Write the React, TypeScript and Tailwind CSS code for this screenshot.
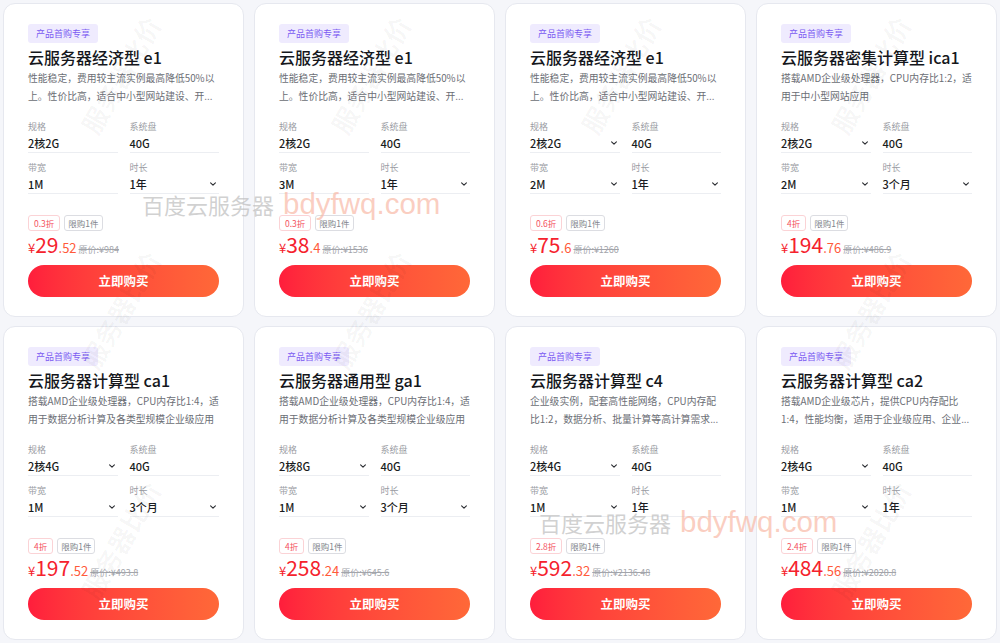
import React from "react";

type Field = { label: string; value: string; select?: boolean };

type Product = {
  title: string;
  desc: [string, string];
  fields: Field[];
  discount: string;
  price: string;
  cents: string;
  original: string;
};

const f = (
  spec: string,
  specSel: boolean,
  bw: string,
  bwSel: boolean,
  time: string,
  timeSel: boolean
): Field[] => [
  { label: "规格", value: spec, select: specSel },
  { label: "系统盘", value: "40G" },
  { label: "带宽", value: bw, select: bwSel },
  { label: "时长", value: time, select: timeSel },
];

const e1Desc: [string, string] = ["性能稳定，费用较主流实例最高降低50%以", "上。性价比高，适合中小型网站建设、开..."];
const ca1Desc: [string, string] = ["搭载AMD企业级处理器，CPU内存比1:4，适", "用于数据分析计算及各类型规模企业级应用"];

const products: Product[] = [
  {
    title: "云服务器经济型 e1",
    desc: e1Desc,
    fields: f("2核2G", false, "1M", false, "1年", true),
    discount: "0.3折",
    price: "29",
    cents: ".52",
    original: "原价:¥984",
  },
  {
    title: "云服务器经济型 e1",
    desc: e1Desc,
    fields: f("2核2G", false, "3M", false, "1年", true),
    discount: "0.3折",
    price: "38",
    cents: ".4",
    original: "原价:¥1536",
  },
  {
    title: "云服务器经济型 e1",
    desc: e1Desc,
    fields: f("2核2G", true, "2M", true, "1年", true),
    discount: "0.6折",
    price: "75",
    cents: ".6",
    original: "原价:¥1260",
  },
  {
    title: "云服务器密集计算型 ica1",
    desc: ["搭载AMD企业级处理器，CPU内存比1:2，适", "用于中小型网站应用"],
    fields: f("2核2G", true, "2M", true, "3个月", true),
    discount: "4折",
    price: "194",
    cents: ".76",
    original: "原价:¥486.9",
  },
  {
    title: "云服务器计算型 ca1",
    desc: ca1Desc,
    fields: f("2核4G", true, "1M", true, "3个月", true),
    discount: "4折",
    price: "197",
    cents: ".52",
    original: "原价:¥493.8",
  },
  {
    title: "云服务器通用型 ga1",
    desc: ca1Desc,
    fields: f("2核8G", true, "1M", true, "3个月", true),
    discount: "4折",
    price: "258",
    cents: ".24",
    original: "原价:¥645.6",
  },
  {
    title: "云服务器计算型 c4",
    desc: ["企业级实例，配套高性能网络，CPU内存配", "比1:2，数据分析、批量计算等高计算需求..."],
    fields: f("2核4G", true, "1M", true, "1年", false),
    discount: "2.8折",
    price: "592",
    cents: ".32",
    original: "原价:¥2136.48",
  },
  {
    title: "云服务器计算型 ca2",
    desc: ["搭载AMD企业级芯片，提供CPU内存配比", "1:4，性能均衡，适用于企业级应用、企业..."],
    fields: f("2核4G", true, "1M", true, "1年", false),
    discount: "2.4折",
    price: "484",
    cents: ".56",
    original: "原价:¥2020.8",
  },
];

const Chevron = () => (
  <svg width="8" height="8" viewBox="0 0 10 10" fill="none" className="mr-[2px] shrink-0">
    <path d="M2 3.5 L5 6.5 L8 3.5" stroke="#2a2c31" strokeWidth="1.4" strokeLinecap="round" strokeLinejoin="round" />
  </svg>
);

function ProductCard({ p }: { p: Product }) {
  return (
    <div className="flex flex-col rounded-[12px] border border-[#e6e8ef] bg-white px-6 pt-[20px]">
      <div className="flex">
        <span className="rounded-[3px] bg-[#efebfe] px-[8px] py-[3px] text-[9px] leading-[13px] text-[#7b5bf2]">
          产品首购专享
        </span>
      </div>
      <h3 className="mt-[2px] text-[16px] leading-[24px] font-medium text-[#15171c]">{p.title}</h3>
      <div className="text-[9.8px] leading-[18px] text-[#6b6e75]">
        <div className="whitespace-nowrap">{p.desc[0]}</div>
        <div className="whitespace-nowrap">{p.desc[1]}</div>
      </div>

      <div className="mt-[14px] grid grid-cols-2 gap-x-[12px] gap-y-[7px]">
        {p.fields.map((fd, i) => (
          <div key={i} className="flex flex-col">
            <span className="text-[9px] leading-[15px] text-[#9a9ca3]">{fd.label}</span>
            <div className="flex h-[19px] items-center justify-between border-b border-[#eceef2]">
              <span className="text-[11px] leading-[18px] font-medium text-[#1a1c21]">{fd.value}</span>
              {fd.select && <Chevron />}
            </div>
          </div>
        ))}
      </div>

      <div className="mt-[21px] flex gap-[4px]">
        <span className="rounded-[3px] border border-[#fbd3d6] px-[5px] text-[8.5px] leading-[14px] text-[#f4535f]">
          {p.discount}
        </span>
        <span className="rounded-[3px] border border-[#dcdde2] px-[3px] text-[8.5px] leading-[14px] text-[#83868d]">
          限购1件
        </span>
      </div>

      <div className="flex h-[26px] items-baseline">
        <span className="text-[13px] text-[#f5222d]">¥</span>
        <span className="text-[21px] leading-[26px] text-[#f5222d]">{p.price}</span>
        <span className="text-[13px] text-[#ff5a3a]">{p.cents}</span>
        <span className="ml-[2px] text-[9px] text-[#a3a5ab] line-through">{p.original}</span>
      </div>

      <button className="mt-[8px] h-[32px] w-full rounded-full bg-gradient-to-r from-[#ff1d3c] to-[#ff6838] text-[12.5px] font-bold text-white">
        立即购买
      </button>
    </div>
  );
}

function Watermark({ className }: { className: string }) {
  return (
    <div className={`pointer-events-none absolute flex items-baseline gap-[9px] leading-[30px] ${className}`}>
      <span className="text-[22px] text-[#bdbdbd]/70">百度云服务器</span>
      <span className="text-[29.5px] text-[#f9b8a6]/70" style={{ fontFamily: '"Liberation Sans", sans-serif' }}>
        bdyfwq.com
      </span>
    </div>
  );
}

const diag = [
  [55, 55],
  [305, 55],
  [555, 55],
  [805, 55],
  [55, 290],
  [305, 290],
  [805, 290],
  [55, 520],
  [805, 520],
];

export default function App() {
  return (
    <div
      className="relative h-[643px] w-[1000px] overflow-hidden bg-[#f5f6fa] p-[3px]"
      style={{ fontFamily: '"Noto Sans CJK SC", "Noto Sans", sans-serif' }}
    >
      <div className="grid h-full grid-cols-4 grid-rows-2 gap-x-[10px] gap-y-[9px]">
        {products.map((p, i) => (
          <ProductCard key={i} p={p} />
        ))}
      </div>

      {/* watermarks over the cards */}
      <Watermark className="left-[142px] top-[189px]" />
      <Watermark className="left-[539px] top-[507px]" />
      {diag.map(([x, y], i) => (
        <div
          key={i}
          className="pointer-events-none absolute -rotate-[60deg] text-[26px] font-bold text-[#000]/[0.035]"
          style={{ left: x, top: y }}
        >
          服务器比价
        </div>
      ))}
    </div>
  );
}
